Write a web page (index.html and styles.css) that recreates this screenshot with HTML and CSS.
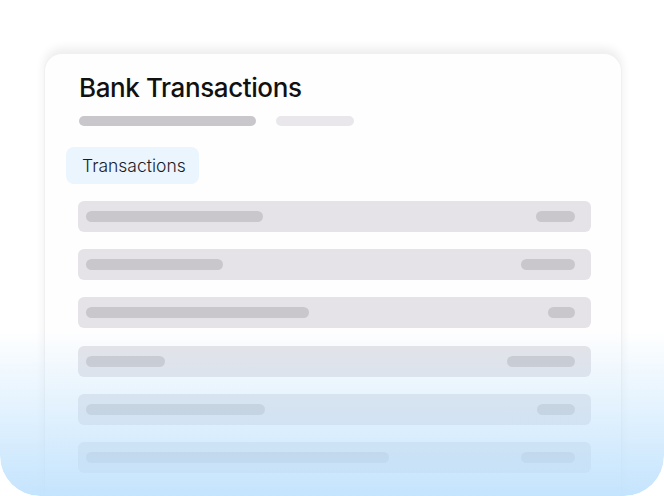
FILE: index.html
```html
<!DOCTYPE html>
<html lang="en">

<head>
    <meta charset="UTF-8">
    <meta name="viewport" content="width=device-width, initial-scale=1.0">
    <title>Bank Transactions</title>
    <link rel="stylesheet" href="styles.css">
</head>

<body>
    <div class="frame">
        <div class="card">
            <h1 class="title">Bank Transactions</h1>
            <div class="sub">
                <div class="line dark" style="width: 177px"></div>
                <div class="line light" style="width: 78px"></div>
            </div>
            <div class="tab">Transactions</div>
            <div class="rows">
                <div class="row">
                    <div class="bar" style="width: 177px"></div>
                    <div class="bar" style="width: 39px"></div>
                </div>
                <div class="row">
                    <div class="bar" style="width: 137px"></div>
                    <div class="bar" style="width: 54px"></div>
                </div>
                <div class="row">
                    <div class="bar" style="width: 223px"></div>
                    <div class="bar" style="width: 27px"></div>
                </div>
                <div class="row">
                    <div class="bar" style="width: 79px"></div>
                    <div class="bar" style="width: 68px"></div>
                </div>
                <div class="row">
                    <div class="bar" style="width: 179px"></div>
                    <div class="bar" style="width: 38px"></div>
                </div>
                <div class="row">
                    <div class="bar" style="width: 303px"></div>
                    <div class="bar" style="width: 54px"></div>
                </div>
            </div>
        </div>
        <div class="fade"></div>
    </div>
</body>

</html>
```

FILE: styles.css
```css
body {
    margin: 0;
    background-color: #ffffff;
    font-family: Inter, "Noto Sans", sans-serif;
}

.frame {
    position: relative;
    width: 664px;
    height: 496px;
    overflow: hidden;
    border-radius: 0 0 40px 40px;
    padding-top: 53px;
    box-sizing: border-box;
}

.card {
    width: 578px;
    height: 470px;
    margin-left: 44px;
    box-sizing: border-box;
    background-color: #fefefe;
    border: 1px solid #f0f0f2;
    border-bottom: none;
    border-radius: 18px 18px 0 0;
    box-shadow: 0 -5px 10px rgba(0, 0, 0, 0.07);
    padding: 16px 30px 0 21px;
}

.title {
    margin: 0 0 0 13px;
    font-size: 26px;
    line-height: 36px;
    font-weight: 550;
    letter-spacing: -0.4px;
    color: #111111;
}

.sub {
    display: flex;
    gap: 20px;
    margin: 10px 0 0 13px;
}

.line {
    height: 10px;
    border-radius: 5px;
}

.dark {
    background-color: #c9c7cb;
}

.light {
    background-color: #e9e7eb;
}

.tab {
    display: inline-block;
    margin-top: 21px;
    padding: 0 13px 0 16px;
    height: 37px;
    line-height: 37px;
    font-size: 17.5px;
    font-weight: 350;
    color: #1c1c28;
    background-color: #eaf5fe;
    border-radius: 8px;
}

.rows {
    display: flex;
    flex-direction: column;
    gap: 17.2px;
    margin: 17px 0 0 12px;
}

.row {
    display: flex;
    justify-content: space-between;
    align-items: center;
    height: 31px;
    padding: 0 16px 0 8px;
    background-color: #e5e3e7;
    border-radius: 6px;
}

.bar {
    height: 11px;
    border-radius: 6px;
    background-color: #c9c7cb;
}

.fade {
    position: absolute;
    left: 0;
    right: 0;
    top: 330px;
    bottom: 0;
    border-radius: 0 0 40px 40px;
    background: linear-gradient(to bottom, rgba(196, 228, 253, 0) 0%, rgba(196, 228, 253, 0.35) 35%, rgba(190, 225, 253, 0.9) 100%);
}
```
